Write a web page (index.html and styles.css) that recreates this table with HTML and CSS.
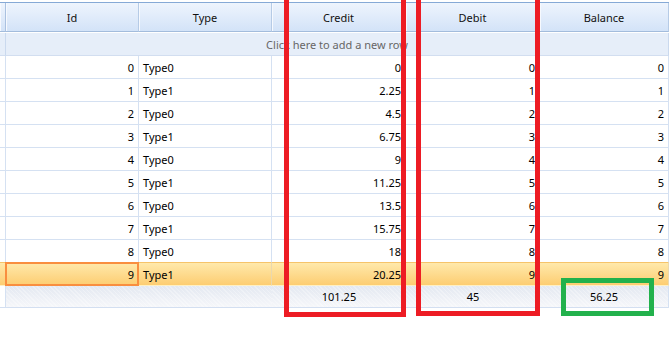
FILE: index.html
```html
<!DOCTYPE html>
<html>
<head>
<meta charset="utf-8">
<link rel="stylesheet" href="styles.css">
</head>
<body>
<div class="stage">
  <div class="grid">
    <div class="hdr ind"></div>
    <div class="hdr">Id</div>
    <div class="hdr">Type</div>
    <div class="hdr">Credit</div>
    <div class="hdr">Debit</div>
    <div class="hdr last">Balance</div>

    <div class="newrow ind"></div>
    <div class="newrow text">Click here to add a new row</div>

    <div class="c ind"></div><div class="c r">0</div><div class="c">Type0</div><div class="c r">0</div><div class="c r">0</div><div class="c r last">0</div>
    <div class="c ind"></div><div class="c r">1</div><div class="c">Type1</div><div class="c r">2.25</div><div class="c r">1</div><div class="c r last">1</div>
    <div class="c ind"></div><div class="c r">2</div><div class="c">Type0</div><div class="c r">4.5</div><div class="c r">2</div><div class="c r last">2</div>
    <div class="c ind"></div><div class="c r">3</div><div class="c">Type1</div><div class="c r">6.75</div><div class="c r">3</div><div class="c r last">3</div>
    <div class="c ind"></div><div class="c r">4</div><div class="c">Type0</div><div class="c r">9</div><div class="c r">4</div><div class="c r last">4</div>
    <div class="c ind"></div><div class="c r">5</div><div class="c">Type1</div><div class="c r">11.25</div><div class="c r">5</div><div class="c r last">5</div>
    <div class="c ind"></div><div class="c r">6</div><div class="c">Type0</div><div class="c r">13.5</div><div class="c r">6</div><div class="c r last">6</div>
    <div class="c ind"></div><div class="c r">7</div><div class="c">Type1</div><div class="c r">15.75</div><div class="c r">7</div><div class="c r last">7</div>
    <div class="c ind pre"></div><div class="c r pre">8</div><div class="c pre">Type0</div><div class="c r pre">18</div><div class="c r pre">8</div><div class="c r last pre">8</div>
    <div class="c ind sel"></div><div class="c r sel cur">9</div><div class="c sel">Type1</div><div class="c r sel">20.25</div><div class="c r sel">9</div><div class="c r last sel">9</div>

    <div class="foot ind"></div>
    <div class="foot"></div>
    <div class="foot"></div>
    <div class="foot">101.25</div>
    <div class="foot">45</div>
    <div class="foot last">56.25</div>
  </div>

  <div class="mark red credit"></div>
  <div class="mark red debit"></div>
  <div class="mark green balance"></div>
</div>
</body>
</html>
```

FILE: styles.css
```css
html, body {
  margin: 0;
  padding: 0;
  background: #ffffff;
}

.stage {
  position: relative;
  width: 670px;
  height: 362px;
  overflow: hidden;
  font-family: "Noto Sans", "Open Sans", sans-serif;
  font-size: 11px;
  color: #000;
}

.grid {
  margin-top: 2px;
  display: grid;
  grid-template-columns: 6px 133px 133px 134px 134px 129px;
  border-top: 1px solid #86a9d6;
  width: 669px;
}

.hdr {
  height: 28px;
  display: flex;
  align-items: center;
  justify-content: center;
  background: linear-gradient(#eef4fd, #d3e3f8);
  border-right: 1px solid #b6cbe6;
  box-shadow: inset 1px 0 0 #f6f9fe;
  border-bottom: 1px solid #a3bcdc;
  color: #111;
}

.hdr.ind {
  border-right: 1px solid #aac1e0;
}

.newrow {
  height: 22px;
  margin-top: 1px;
  background: #e6eef9;
  border-bottom: 1px solid #d2def0;
}

.newrow.ind {
  border-right: 1px solid #cad9ee;
}

.newrow.text {
  grid-column: 2 / 7;
  display: flex;
  align-items: center;
  justify-content: center;
  color: #666666;
  border-right: 1px solid #cad9ee;
}

.c {
  height: 22px;
  display: flex;
  align-items: center;
  padding: 0 4px;
  box-sizing: content-box;
  border-right: 1px solid #d5e1f2;
  border-bottom: 1px solid #d5e1f2;
  white-space: nowrap;
  width: calc(100% - 9px);
}

.c.ind {
  padding: 0;
  width: 5px;
}

.c.r {
  justify-content: flex-end;
}

.c.pre {
  border-bottom-color: #f6c46a;
}

.c.sel {
  background: linear-gradient(#ffe9ab, #fdcd72);
  border-right-color: #ead8ae;
  border-bottom-color: #fff0c4;
}

.c.ind.sel {
  border-right-color: #f2c574;
}

.c.cur {
  position: relative;
}

.c.cur::after {
  content: "";
  position: absolute;
  left: -1px;
  top: -1px;
  right: -1px;
  bottom: -1px;
  border: 2px solid #f98e3f;
  pointer-events: none;
}

.foot {
  height: 21px;
  display: flex;
  align-items: center;
  justify-content: center;
  border-bottom: 1px solid #d3dff1;
  background:
    repeating-linear-gradient(45deg, rgba(255,255,255,0.3) 0 1px, rgba(255,255,255,0) 1px 3px),
    linear-gradient(#e3e8f1, #f6f7fa);
}

.foot.ind {
  background: #ffffff;
  border-right: 1px solid #d5e1f2;
}

.foot.last {
  border-right: 1px solid #d5e1f2;
}

.mark {
  position: absolute;
  box-sizing: border-box;
  border-width: 5px;
  border-style: solid;
}

.red {
  border-color: #ed1c24;
}

.green {
  border-color: #22b14c;
}

.credit {
  left: 284px;
  top: -10px;
  width: 122px;
  height: 327px;
}

.debit {
  left: 416px;
  top: -10px;
  width: 124px;
  height: 326px;
}

.balance {
  left: 561px;
  top: 278px;
  width: 93px;
  height: 38px;
}
```
